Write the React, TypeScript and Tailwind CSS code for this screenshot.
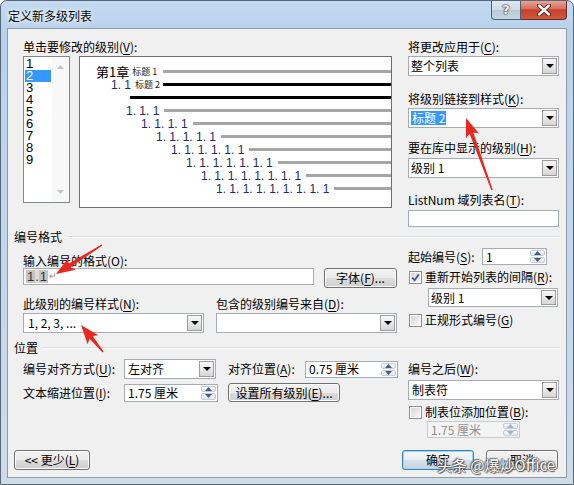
import React from "react";

type Kids = { children?: React.ReactNode; className?: string };

function Label({ children, className = "" }: Kids) {
  return (
    <div className={"h-[14px] leading-[14px] text-[12px] whitespace-nowrap " + className}>
      {children}
    </div>
  );
}

function Key({ children }: Kids) {
  return <span className="underline underline-offset-[2px]">{children}</span>;
}

function DropButton() {
  return (
    <div className="m-[1px] w-[15px] shrink-0 flex items-center justify-center border border-[#9c9c9c] bg-[linear-gradient(180deg,#f8f8f8_0%,#e8e8e8_50%,#d6d6d6_100%)]">
      <div className="w-0 h-0 border-x-[4px] border-x-transparent border-t-[4px] border-t-black" />
    </div>
  );
}

function Combo({ children, className = "" }: Kids) {
  return (
    <div className={"flex bg-white border border-[#a5acb5] " + className}>
      <div className="flex-1 flex items-center pl-[2px] text-[12px] leading-[14px] whitespace-nowrap overflow-hidden">
        {children}
      </div>
      <DropButton />
    </div>
  );
}

function SpinArrows({ disabled }: { disabled?: boolean }) {
  const arrow = disabled ? "#a9b4c2" : "#4a5d7e";
  return (
    <div className="w-[15px] shrink-0 m-[1px] flex flex-col gap-[1px]">
      <div className="flex-1 flex items-center justify-center rounded-[2px] border border-[#c3cfdc] bg-[linear-gradient(180deg,#f6f9fc,#dfe7f0)]">
        <svg width="7" height="4" viewBox="0 0 7 4">
          <path d="M0 4 L3.5 0 L7 4 Z" fill={arrow} />
        </svg>
      </div>
      <div className="flex-1 flex items-center justify-center rounded-[2px] border border-[#c3cfdc] bg-[linear-gradient(180deg,#f6f9fc,#dfe7f0)]">
        <svg width="7" height="4" viewBox="0 0 7 4">
          <path d="M0 0 L3.5 4 L7 0 Z" fill={arrow} />
        </svg>
      </div>
    </div>
  );
}

function Spin({ value, className = "", disabled }: { value: string; className?: string; disabled?: boolean }) {
  return (
    <div
      className={
        "flex border " +
        (disabled ? "bg-[#f4f4f4] border-[#cacaca] text-[#8f8f8f] " : "bg-white border-[#a5acb5] ") +
        className
      }
    >
      <div className="flex-1 flex items-center pl-[3px] text-[12px] leading-[14px] whitespace-nowrap">{value}</div>
      <SpinArrows disabled={disabled} />
    </div>
  );
}

function Btn({ children, className = "", def }: Kids & { def?: boolean }) {
  return (
    <div
      className={
        "flex items-center justify-center rounded-[3px] border text-[12px] leading-[14px] whitespace-nowrap " +
        (def
          ? "border-[#3c7fb1] bg-[linear-gradient(180deg,#f4f8fb_0%,#e9eff4_50%,#d8e1e9_51%,#c9d3dc_100%)] shadow-[inset_0_0_0_1px_#9fd6f6] "
          : "border-[#707070] bg-[linear-gradient(180deg,#f2f2f2_0%,#ebebeb_50%,#dddddd_51%,#cfcfcf_100%)] shadow-[inset_0_0_0_1px_#fcfcfc] ") +
        className
      }
    >
      {children}
    </div>
  );
}

function Check({ checked }: { checked?: boolean }) {
  return (
    <div className="w-[13px] h-[13px] shrink-0 border border-[#8e8f8f] bg-white p-[1px]">
      <div className="w-full h-full flex items-center justify-center bg-[linear-gradient(135deg,#d7d7d7,#f7f7f7)]">
        {checked && (
          <svg width="9" height="9" viewBox="0 0 9 9">
            <path d="M1.2 4.6 L3.6 7.2 L7.8 1.4" fill="none" stroke="#4b5f96" strokeWidth="1.9" />
          </svg>
        )}
      </div>
    </div>
  );
}

function GroupHeader({ title, className = "", gap }: { title: string; className?: string; gap: string }) {
  return (
    <div className={"flex items-center h-[14px] pl-[6px] pr-[6px] " + className}>
      <span className="text-[12px] leading-[14px] whitespace-nowrap">{title}</span>
      <div className={"flex-1 border-t border-t-[#d5dfe5] border-b border-b-white " + gap} />
    </div>
  );
}

const numberRows = [
  { pl: "pl-[46px]", t: "1. 1. 1" },
  { pl: "pl-[61px]", t: "1. 1. 1. 1" },
  { pl: "pl-[76px]", t: "1. 1. 1. 1. 1" },
  { pl: "pl-[91px]", t: "1. 1. 1. 1. 1. 1" },
  { pl: "pl-[106px]", t: "1. 1. 1. 1. 1. 1. 1" },
  { pl: "pl-[121px]", t: "1. 1. 1. 1. 1. 1. 1. 1" },
  { pl: "pl-[136px]", t: "1. 1. 1. 1. 1. 1. 1. 1. 1" },
];

function Preview() {
  return (
    <div className="w-[313px] h-[152px] ml-[9px] bg-white border border-[#6e6e6e] pt-[8px]">
      <div className="h-[13px] flex items-center pl-[16px]">
        <span className="text-[13px] leading-[13px] text-black whitespace-nowrap">第1章</span>
        <span className="ml-[3px] text-[9px] leading-[9px] whitespace-pre text-[#222]">标题 1</span>
        <div className="ml-[6px] flex-1 h-[3px] bg-[#a6a6a6]" />
      </div>
      <div className="h-[13px] flex items-center pl-[31px]">
        <span className="font-['Liberation_Sans',sans-serif] text-[12px] leading-[12px] whitespace-pre text-[#222a5c]">1. 1</span>
        <span className="ml-[4px] text-[9px] leading-[9px] whitespace-pre text-[#222]">标题 2</span>
        <div className="ml-[3px] flex-1 h-[3px] bg-black" />
      </div>
      <div className="h-[13px] flex items-center pl-[50px]">
        <div className="flex-1 h-[3px] bg-black" />
      </div>
      {numberRows.map((r) => (
        <div key={r.t} className={"h-[13px] flex items-center " + r.pl}>
          <span className="font-['Liberation_Sans',sans-serif] text-[12px] leading-[12px] whitespace-pre text-[#222a5c]">
            {r.t}
          </span>
          <div className="ml-[5px] flex-1 h-[3px] bg-[#a6a6a6]" />
        </div>
      ))}
    </div>
  );
}

function LevelList() {
  const items = [1, 2, 3, 4, 5, 6, 7, 8, 9];
  return (
    <div className="w-[47px] h-[147px] bg-white border border-[#828790] flex">
      <div className="w-[28px] pt-[1px]">
        {items.map((n) => (
          <div
            key={n}
            className={
              "mx-[1px] h-[12px] leading-[12px] pl-[1px] text-[13px] font-['Liberation_Sans',sans-serif] " +
              (n === 2 ? "bg-[#3399ff] text-white" : "text-black")
            }
          >
            {n}
          </div>
        ))}
      </div>
      <div className="flex-1 bg-[#f8f8f8] flex flex-col justify-between items-center py-[8px]">
        <svg width="7" height="4" viewBox="0 0 7 4">
          <path d="M0 4 L3.5 0 L7 4 Z" fill="#c2c2c2" />
        </svg>
        <svg width="7" height="4" viewBox="0 0 7 4">
          <path d="M0 0 L3.5 4 L7 0 Z" fill="#c2c2c2" />
        </svg>
      </div>
    </div>
  );
}

function arrowPoints(tx: number, ty: number, px: number, py: number) {
  const dx = px - tx;
  const dy = py - ty;
  const len = Math.hypot(dx, dy);
  const ux = dx / len;
  const uy = dy / len;
  const nx = -uy;
  const ny = ux;
  const L = 19;
  const hw = 7;
  const sw = 2;
  const tw = 0.7;
  const bx = px - ux * L;
  const by = py - uy * L;
  const pts = [
    [tx + nx * tw, ty + ny * tw],
    [bx + ux * 3 + nx * sw, by + uy * 3 + ny * sw],
    [bx + nx * hw, by + ny * hw],
    [px, py],
    [bx - nx * hw, by - ny * hw],
    [bx + ux * 3 - nx * sw, by + uy * 3 - ny * sw],
    [tx - nx * tw, ty - ny * tw],
  ];
  return pts.map((p) => p[0].toFixed(1) + "," + p[1].toFixed(1)).join(" ");
}

export default function App() {
  return (
    <div className="relative w-[574px] h-[485px] overflow-hidden rounded-t-[7px] border border-[#56687a] bg-[linear-gradient(180deg,#c3daf1_0%,#b8d2ec_6%,#c4d8ec_60%,#cfdbe7_100%)] font-['Noto_Sans_CJK_SC',sans-serif] text-black">
      {/* title bar */}
      <div className="h-[27px] flex items-start">
        <div className="pl-[7px] mt-[8px] text-[12px] leading-[14px] [text-shadow:0_0_6px_#fff,0_0_3px_#fff]">
          定义新多级列表
        </div>
        <div className="ml-auto mr-[6px] -mt-[1px] flex h-[20px]">
          <div className="w-[30px] flex items-center justify-center rounded-bl-[4px] border border-[#4f6173] border-t-0 bg-[linear-gradient(180deg,#e3ebf3_0%,#cfdbe7_50%,#b9c8d7_51%,#c8d6e4_100%)]">
            <span className="font-['DejaVu_Sans',sans-serif] font-bold text-[13px] leading-[14px] text-white [text-shadow:0_0_1px_#333,0_0_1px_#333,0_0_2px_#333]">
              ?
            </span>
          </div>
          <div className="w-[46px] flex items-center justify-center rounded-br-[4px] border border-l-0 border-t-0 border-[#6b2a22] bg-[linear-gradient(180deg,#e9a99c_0%,#d7705c_45%,#c5412a_52%,#cf5a3e_100%)]">
            <svg width="14" height="12" viewBox="0 0 14 12">
              <path d="M2 1.5 L12 10.5 M12 1.5 L2 10.5" stroke="#4a1a14" strokeWidth="4.2" strokeLinecap="round" />
              <path d="M2 1.5 L12 10.5 M12 1.5 L2 10.5" stroke="#ffffff" strokeWidth="2.4" strokeLinecap="round" />
            </svg>
          </div>
        </div>
      </div>

      {/* client area */}
      <div className="mx-[6px] h-[450px] border border-[#8e9aa8] bg-[#f0f0f0]">
        {/* top section */}
        <div className="flex pl-[15px] pt-[11px]">
          <div className="w-[369px]">
            <Label>
              单击要修改的级别(<Key>V</Key>):
            </Label>
            <div className="flex items-start mt-[2px]">
              <LevelList />
              <Preview />
            </div>
          </div>
          <div className="ml-[16px] w-[151px]">
            <Label>
              将更改应用于(<Key>C</Key>):
            </Label>
            <Combo className="mt-[2px] h-[20px]">整个列表</Combo>
            <Label className="mt-[16px]">
              将级别链接到样式(<Key>K</Key>):
            </Label>
            <Combo className="mt-[2px] h-[20px]">
              <span className="bg-[#3399ff] text-white px-[1px] whitespace-pre">标题 2</span>
            </Combo>
            <Label className="mt-[13px]">
              要在库中显示的级别(<Key>H</Key>):
            </Label>
            <Combo className="mt-[3px] h-[20px]">
              <span className="whitespace-pre">级别 1</span>
            </Combo>
            <Label className="mt-[15px]">
              ListNum 域列表名(<Key>T</Key>):
            </Label>
            <div className="mt-[3px] h-[17px] bg-white border border-[#a5acb5]" />
          </div>
        </div>

        {/* 编号格式 */}
        <GroupHeader title="编号格式" className="mt-[3px]" gap="ml-[5px]" />
        <div className="flex pl-[15px]">
          <div className="w-[374px]">
            <Label className="mt-[10px]">
              输入编号的格式(<Key>O</Key>):
            </Label>
            <div className="flex items-start">
              <div className="w-[291px] h-[17px] bg-white border border-[#a5acb5] flex items-center pl-[2px] text-[13px] leading-[13px] font-['Liberation_Sans',sans-serif] text-[#333]">
                <span className="bg-[#c4c4c4] px-[1px]">1</span>
                <span className="bg-[#dcdcdc]">.</span>
                <span className="bg-[#c4c4c4] px-[1px]">1</span>
                <span className="ml-[1px] text-[9px] text-[#8a8a8a]">↵</span>
              </div>
              <Btn className="ml-[10px] w-[73px] h-[20px]">
                字体(<Key>F</Key>)...
              </Btn>
            </div>
            <div className="flex mt-[9px] gap-[12px]">
              <div className="w-[181px]">
                <Label>
                  此级别的编号样式(<Key>N</Key>):
                </Label>
                <Combo className="mt-[2px] h-[20px]">
                  <span className="pl-[2px] whitespace-pre">1, 2, 3, ...</span>
                </Combo>
              </div>
              <div className="w-[181px]">
                <Label>
                  包含的级别编号来自(<Key>D</Key>):
                </Label>
                <Combo className="mt-[2px] h-[20px]" />
              </div>
            </div>
          </div>
          <div className="ml-[11px] w-[151px]">
            <div className="flex items-center h-[17px] mt-[4px]">
              <Label className="w-[74px]">
                起始编号(<Key>S</Key>):
              </Label>
              <Spin className="w-[65px] h-[17px]" value="1" />
            </div>
            <div className="flex items-center h-[14px] mt-[5px] pl-[1px]">
              <Check checked />
              <Label className="ml-[3px]">
                重新开始列表的间隔(<Key>R</Key>):
              </Label>
            </div>
            <Combo className="mt-[4px] ml-[20px] w-[130px] h-[19px]">
              <span className="whitespace-pre">级别 1</span>
            </Combo>
            <div className="flex items-center h-[14px] mt-[6px] pl-[1px]">
              <Check />
              <Label className="ml-[3px]">
                正规形式编号(<Key>G</Key>)
              </Label>
            </div>
          </div>
        </div>

        {/* 位置 */}
        <GroupHeader title="位置" className="mt-[8px]" gap="ml-[4px]" />
        <div className="flex pl-[15px]">
          <div className="w-[375px]">
            <div className="flex items-center h-[20px] mt-[4px]">
              <Label className="w-[101px]">
                编号对齐方式(<Key>U</Key>):
              </Label>
              <Combo className="w-[92px] h-[20px]">
                <span className="pl-[1px]">左对齐</span>
              </Combo>
              <Label className="ml-[12px] w-[77px]">
                对齐位置(<Key>A</Key>):
              </Label>
              <Spin className="w-[93px] h-[17px]" value="0.75 厘米" />
            </div>
            <div className="flex items-center h-[19px] mt-[4px]">
              <Label className="w-[101px]">
                文本缩进位置(<Key>I</Key>):
              </Label>
              <Spin className="w-[94px] h-[18px]" value="1.75 厘米" />
              <Btn className="ml-[10px] w-[112px] h-[19px]">
                设置所有级别(<Key>E</Key>)...
              </Btn>
            </div>
          </div>
          <div className="ml-[10px] w-[151px]">
            <Label className="mt-[7px]">
              编号之后(<Key>W</Key>):
            </Label>
            <Combo className="mt-[4px] h-[20px]">
              <span className="pl-[1px]">制表符</span>
            </Combo>
            <div className="flex items-center h-[14px] mt-[5px] pl-[1px]">
              <Check />
              <Label className="ml-[3px]">
                制表位添加位置(<Key>B</Key>):
              </Label>
            </div>
            <Spin className="mt-[2px] ml-[19px] w-[93px] h-[17px]" value="1.75 厘米" disabled />
          </div>
        </div>

        {/* buttons */}
        <div className="flex justify-between mt-[12px] pl-[6px] pr-[8px]">
          <Btn className="w-[76px] h-[20px]">
            &lt;&lt; 更少(<Key>L</Key>)
          </Btn>
          <div className="flex gap-[12px]">
            <Btn def className="w-[72px] h-[20px]">
              确定
            </Btn>
            <Btn className="w-[72px] h-[20px]">取消</Btn>
          </div>
        </div>
      </div>

      {/* watermark */}
      <div className="absolute left-[436px] top-[454px] text-[15px] leading-[20px] whitespace-pre text-white [text-shadow:0_0_1px_#444,0_0_1px_#444,1px_1px_1px_#555,-1px_-1px_1px_#777]">
        头条 @爆炒Office
      </div>

      {/* annotation arrows */}
      <svg className="absolute left-0 top-0 pointer-events-none" width="574" height="485" viewBox="0 0 574 485">
        <polygon points={arrowPoints(491, 189, 465, 117)} fill="#e8281e" />
        <polygon points={arrowPoints(101, 244, 55, 273)} fill="#e8281e" />
        <polygon points={arrowPoints(102, 351, 80, 324)} fill="#e8281e" />
      </svg>
    </div>
  );
}
